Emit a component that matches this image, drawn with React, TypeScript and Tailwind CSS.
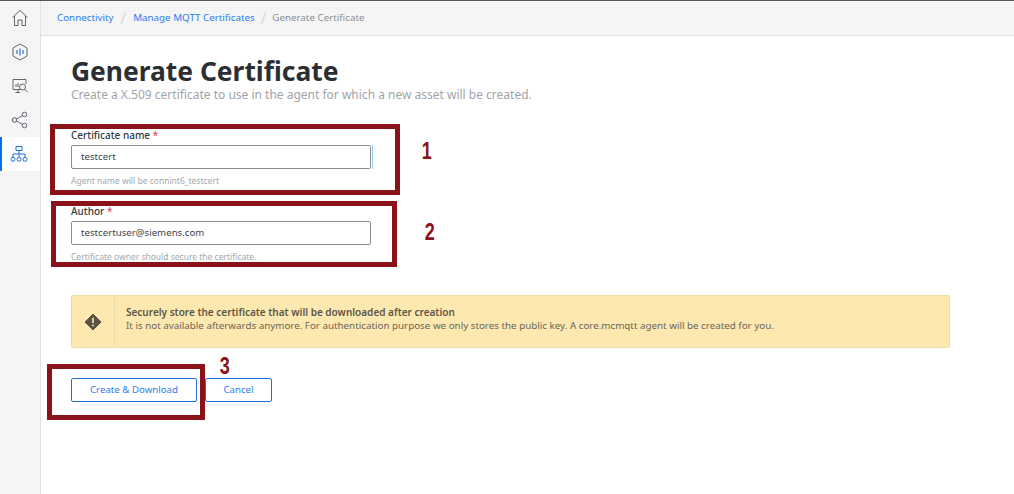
const font = { fontFamily: '"Noto Sans", sans-serif' };

function NavIcon({ children, active }: { children: React.ReactNode; active?: boolean }) {
  return (
    <div
      className={
        active
          ? "h-[34px] flex items-center justify-center bg-white border-l-2 border-[#0a6ee8] pr-[4px] text-[#1f6fd6]"
          : "h-[34px] flex items-center justify-center pr-[1px] text-[#5f6670]"
      }
    >
      <svg width="20" height="20" viewBox="0 0 20 20" fill="none" stroke="currentColor" strokeWidth="1">
        {children}
      </svg>
    </div>
  );
}

function Marker({ className, children }: { className: string; children: string }) {
  return (
    <div
      className={`absolute text-[24px] leading-none font-bold text-[#8a1218] scale-x-75 ${className}`}
      style={{ fontFamily: '"Liberation Sans", sans-serif' }}
    >
      {children}
    </div>
  );
}

function Field({ label, value, hint, className }: { label: string; value: string; hint: string; className: string }) {
  return (
    <div className={`flex flex-col ${className}`}>
      <label className="text-[10px] leading-[14px] font-medium text-[#333a42]">
        {label} <span className="text-[#f0446a]">*</span>
      </label>
      <div className="mt-[3px] w-[300px] h-[24px] border border-[#8c8c8c] rounded-[2px] pl-[9px] flex items-center text-[9.7px] text-[#3c444c] bg-white">
        {value}
      </div>
      <p className="mt-[6px] text-[8.5px] leading-[12px] text-[#a3a8ad]">{hint}</p>
    </div>
  );
}

export default function App() {
  return (
    <div className="relative w-[1014px] h-[494px] overflow-hidden bg-white flex border-t border-[#555]" style={font}>
      <aside className="w-[41px] h-full bg-[#f5f5f5] border-r border-[#e2e2e2] shrink-0">
        <NavIcon>
          <path d="M2.5 9.5 10 2.5l7.5 7M4.5 8v9.5h3.5V12h4v5.5h3.5V8" />
        </NavIcon>
        <NavIcon>
          <path d="M10 2l7 4v8l-7 4-7-4V6z" />
          <path d="M7 8v4M10 6.5v7M13 8v4" stroke="#3d7fd0" strokeWidth="1.3" />
        </NavIcon>
        <NavIcon>
          <path d="M16 8V3.5H3v10h8M8 13.5V16M5.5 16.5H10" />
          <circle cx="12.5" cy="11" r="3" />
          <path d="M14.7 13.2l3 3M6 11V8M8 11V7" />
        </NavIcon>
        <NavIcon>
          <circle cx="4.5" cy="10" r="2.3" />
          <circle cx="14.5" cy="4.5" r="2.3" />
          <circle cx="14.5" cy="15.5" r="2.3" />
          <path d="M6.5 9l6-3.4M6.5 11l6 3.4" />
        </NavIcon>
        <NavIcon active>
          <path d="M7 2.5h6v4H7zM10 6.5V10M4 13v-3h12v3M10 10v3" />
          <circle cx="4" cy="15.3" r="2" />
          <circle cx="10" cy="15.3" r="2" />
          <circle cx="16" cy="15.3" r="2" />
        </NavIcon>
      </aside>

      <main className="flex-1 min-w-0">
        <nav className="h-[35px] bg-[#f5f5f5] border-b border-[#e2e2e2] pl-[16px] flex items-center text-[9.8px] text-[#2f7cf0]">
          <span>Connectivity</span>
          <span className="mx-[7px] text-[16px] font-light text-[#cfcfcf]">/</span>
          <span>Manage MQTT Certificates</span>
          <span className="mx-[6px] text-[16px] font-light text-[#cfcfcf]">/</span>
          <span className="text-[#8a8f94]">Generate Certificate</span>
        </nav>

        <div className="pl-[30px] pt-[21px]">
          <h1 className="text-[26.4px] leading-[28px] font-bold text-[#2b2f33]">Generate Certificate</h1>
          <p className="mt-[3px] text-[12px] leading-[14px] text-[#a0a4a8]">
            Create a X.509 certificate to use in the agent for which a new asset will be created.
          </p>

          <Field className="mt-[26px]" label="Certificate name" value="testcert" hint="Agent name will be connint6_testcert" />
          <Field className="mt-[17px]" label="Author" value="testcertuser@siemens.com" hint="Certificate owner should secure the certificate." />

          <div className="mt-[32px] w-[879px] h-[53px] bg-[#fde9b0] border border-[#eddca8] rounded-[2px] flex">
            <div className="w-[43px] border-r border-[#eddca8] flex items-center justify-center">
              <svg width="18" height="18" viewBox="0 0 18 18">
                <path d="M9 1l8 8-8 8-8-8z" fill="#5b5445" stroke="#5b5445" strokeLinejoin="round" />
                <path d="M9 4.8v5.2M9 11.6v1.6" stroke="#fde9b0" strokeWidth="1.6" />
              </svg>
            </div>
            <div className="pl-[11px] pt-[9px] text-[9.8px] leading-[14px] text-[#6a6558]">
              <div className="text-[10px] font-semibold text-[#5b5648]">Securely store the certificate that will be downloaded after creation</div>
              <div>It is not available afterwards anymore. For authentication purpose we only stores the public key. A core.mcmqtt agent will be created for you.</div>
            </div>
          </div>

          <div className="mt-[30px] flex gap-[8px] text-[9.7px] text-[#2f7cf0]">
            <button className="w-[126px] h-[24px] bg-white border border-[#1f6fd6] rounded-[2px]">Create &amp; Download</button>
            <button className="w-[67px] h-[24px] bg-white border border-[#1f6fd6] rounded-[2px]">Cancel</button>
          </div>
        </div>
      </main>

      {/* annotations drawn on top of the screenshot */}
      <div className="absolute left-[372px] top-[144px] w-[1px] h-[24px] bg-[#9cc8f5]" />
      <div className="absolute left-[50px] top-[123px] w-[350px] h-[71px] border-[5px] border-[#8a1218]" />
      <div className="absolute left-[51px] top-[200px] w-[346px] h-[66px] border-[5px] border-[#8a1218]" />
      <div className="absolute left-[47px] top-[363px] w-[158px] h-[56px] border-[5px] border-[#8a1218]" />
      <Marker className="left-[420px] top-[138px]">1</Marker>
      <Marker className="left-[423px] top-[219px]">2</Marker>
      <Marker className="left-[218px] top-[353px]">3</Marker>
    </div>
  );
}
